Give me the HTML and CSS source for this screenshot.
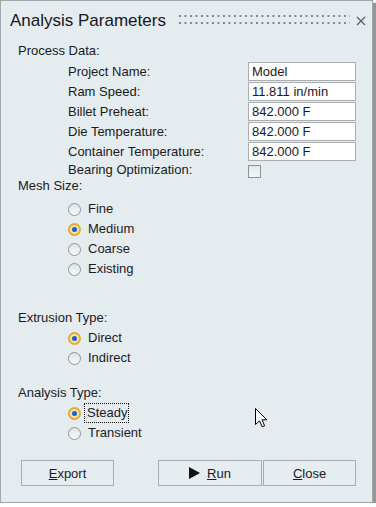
FILE: index.html
```html
<!DOCTYPE html>
<html>
<head>
<meta charset="utf-8">
<link rel="stylesheet" href="styles.css">
</head>
<body>
<div class="window">
  <div class="titlebar">
    <span class="title">Analysis Parameters</span>
    <span class="grip"></span>
    <svg class="close-x" width="10" height="10" viewBox="0 0 10 10"><path d="M1 1 L9 9 M9 1 L1 9" stroke="#5a5e63" stroke-width="1.2" fill="none"/></svg>
  </div>
  <div class="content">
    <div class="section-label">Process Data:</div>
    <div class="fields">
      <label class="flabel">Project Name:</label><div class="input">Model</div>
      <label class="flabel">Ram Speed:</label><div class="input">11.811 in/min</div>
      <label class="flabel">Billet Preheat:</label><div class="input">842.000 F</div>
      <label class="flabel">Die Temperature:</label><div class="input">842.000 F</div>
      <label class="flabel">Container Temperature:</label><div class="input">842.000 F</div>
      <label class="flabel short">Bearing Optimization:</label><div class="check-cell"><span class="checkbox"></span></div>
    </div>

    <div class="section-label">Mesh Size:</div>
    <div class="radios mesh">
      <div class="radio-row"><span class="radio"></span><span class="rtext">Fine</span></div>
      <div class="radio-row"><span class="radio on"></span><span class="rtext">Medium</span></div>
      <div class="radio-row"><span class="radio"></span><span class="rtext">Coarse</span></div>
      <div class="radio-row"><span class="radio"></span><span class="rtext">Existing</span></div>
    </div>

    <div class="section-label extrusion">Extrusion Type:</div>
    <div class="radios">
      <div class="radio-row"><span class="radio on"></span><span class="rtext">Direct</span></div>
      <div class="radio-row"><span class="radio"></span><span class="rtext">Indirect</span></div>
    </div>

    <div class="section-label analysis">Analysis Type:</div>
    <div class="radios">
      <div class="radio-row"><span class="radio on"></span><span class="rtext focus">Steady</span></div>
      <div class="radio-row"><span class="radio"></span><span class="rtext">Transient</span></div>
    </div>

    <div class="buttons">
      <button class="btn export"><u>E</u>xport</button>
      <button class="btn run"><svg width="11" height="12" viewBox="0 0 11 12"><path d="M0 0 L11 6 L0 12 Z" fill="#111"/></svg><span><u>R</u>un</span></button>
      <button class="btn close"><u>C</u>lose</button>
    </div>
  </div>
  <svg class="cursor" width="13" height="20" viewBox="0 0 13 20"><path d="M0.5 0.5 L0.5 16.5 L4.5 12.8 L7.2 18.8 L9.6 17.8 L7 11.8 L11.8 11.8 Z" fill="#fff" stroke="#000" stroke-width="1" stroke-linejoin="miter"/></svg>
</div>
</body>
</html>
```

FILE: styles.css
```css
* { box-sizing: border-box; }
html, body { margin: 0; padding: 0; background: #ffffff; }
body {
  font-family: "Liberation Sans", Arial, sans-serif;
  font-size: 13px;
  color: #1a1a22;
}
.window {
  position: relative;
  width: 373px;
  height: 503px;
  background: #e5ecf0;
  border: 1px solid #a2a7ab;
  box-shadow: 3px 3px 1px rgba(60, 64, 68, 0.55);
}
.titlebar {
  height: 39px;
  display: flex;
  align-items: flex-start;
  padding: 10px 0 0 9px;
}
.title {
  font-size: 17px;
  line-height: 19px;
  color: #15151c;
  white-space: nowrap;
}
.grip {
  margin-left: 13px;
  margin-top: 4px;
  width: 171px;
  height: 10px;
  background-image: radial-gradient(circle at 1px 1px, #7d8388 1.1px, transparent 1.4px);
  background-size: 5.5px 7px;
}
.close-x {
  margin-left: 6px;
  margin-top: 5px;
}
.content {
  padding: 3px 0 0 17px;
  display: flex;
  flex-direction: column;
}
.section-label {
  line-height: 16px;
  height: 16px;
}
.fields {
  margin: 3px 0 0 50px;
  display: grid;
  grid-template-columns: 180px 108px;
  grid-template-rows: 20px 20px 20px 20px 20px 16px;
}
.flabel {
  line-height: 20px;
  white-space: nowrap;
}
.flabel.short { line-height: 16px; }
.input {
  height: 19px;
  background: #ffffff;
  border: 1px solid #a9aeb3;
  padding-left: 3px;
  line-height: 17px;
  white-space: nowrap;
}
.check-cell { padding-top: 3px; }
.checkbox {
  display: block;
  width: 13px;
  height: 13px;
  border: 1px solid #8e9398;
  background: linear-gradient(#e3e6e9, #f7f8f9);
}
.radios {
  margin-left: 50px;
  display: flex;
  flex-direction: column;
  margin-top: 2px;
}
.radios.mesh { margin-top: 5px; }
.radio-row {
  height: 20px;
  display: flex;
  align-items: center;
}
.radio {
  width: 13px;
  height: 13px;
  border-radius: 50%;
  border: 1px solid #8f9499;
  background: linear-gradient(#dfe2e5, #fbfbfb);
  flex: none;
  position: relative;
}
.radio.on {
  border: 2px solid #e2ac35;
  background: #f8e3a0;
}
.radio.on::after {
  content: "";
  position: absolute;
  left: 2px;
  top: 2px;
  width: 5px;
  height: 5px;
  border-radius: 50%;
  background: #1c5fcd;
}
.rtext {
  margin-left: 6px;
  line-height: 18px;
  border: 1px dotted transparent;
  padding: 0 2px 0 0;
}
.rtext.focus {
  margin-left: 3px;
  padding: 0 1px 0 2px;
  border: 1px dotted #111;
  line-height: 18px;
}
.extrusion { margin-top: 31px; }
.analysis { margin-top: 17px; }
.buttons {
  margin-top: 17px;
  margin-left: 3px;
  display: flex;
}
.btn {
  height: 26px;
  font-family: "Liberation Sans", Arial, sans-serif;
  font-size: 13px;
  color: #1a1a22;
  background: #e6edf1;
  border: 1px solid #a8adb2;
  padding: 0;
  display: flex;
  align-items: center;
  justify-content: center;
}
.btn.export { width: 93px; }
.btn.run { width: 104px; margin-left: 44px; gap: 7px; }
.btn.close { width: 93px; margin-left: 1px; }
.cursor {
  position: absolute;
  left: 254px;
  top: 407px;
}
```
